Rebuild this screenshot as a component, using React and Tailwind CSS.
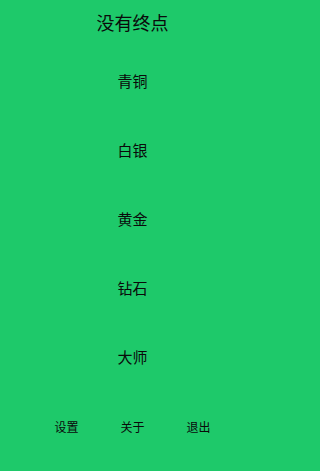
import React from "react";

const levels = ["青铜", "白银", "黄金", "钻石", "大师"];
const menu = ["设置", "关于", "退出"];

export default function App() {
  return (
    <div className="w-full min-h-screen bg-[#1ec96a]">
      <div
        className="w-[265px] h-[471px] text-[#0a0a0a] overflow-hidden"
        style={{ fontFamily: '"Noto Sans CJK SC", "Noto Sans", sans-serif' }}
      >
        <div className="h-[47px] pt-[10px] text-center text-[18px] leading-[24px]">
          没有终点
        </div>
        <div className="flex flex-col">
          {levels.map((name) => (
            <div
              key={name}
              className="h-[69px] flex items-center justify-center text-[15px]"
            >
              {name}
            </div>
          ))}
        </div>
        <div className="mt-[27px] flex justify-center gap-[42px] text-[12px] leading-[16px]">
          {menu.map((m) => (
            <span key={m}>{m}</span>
          ))}
        </div>
      </div>
    </div>
  );
}
